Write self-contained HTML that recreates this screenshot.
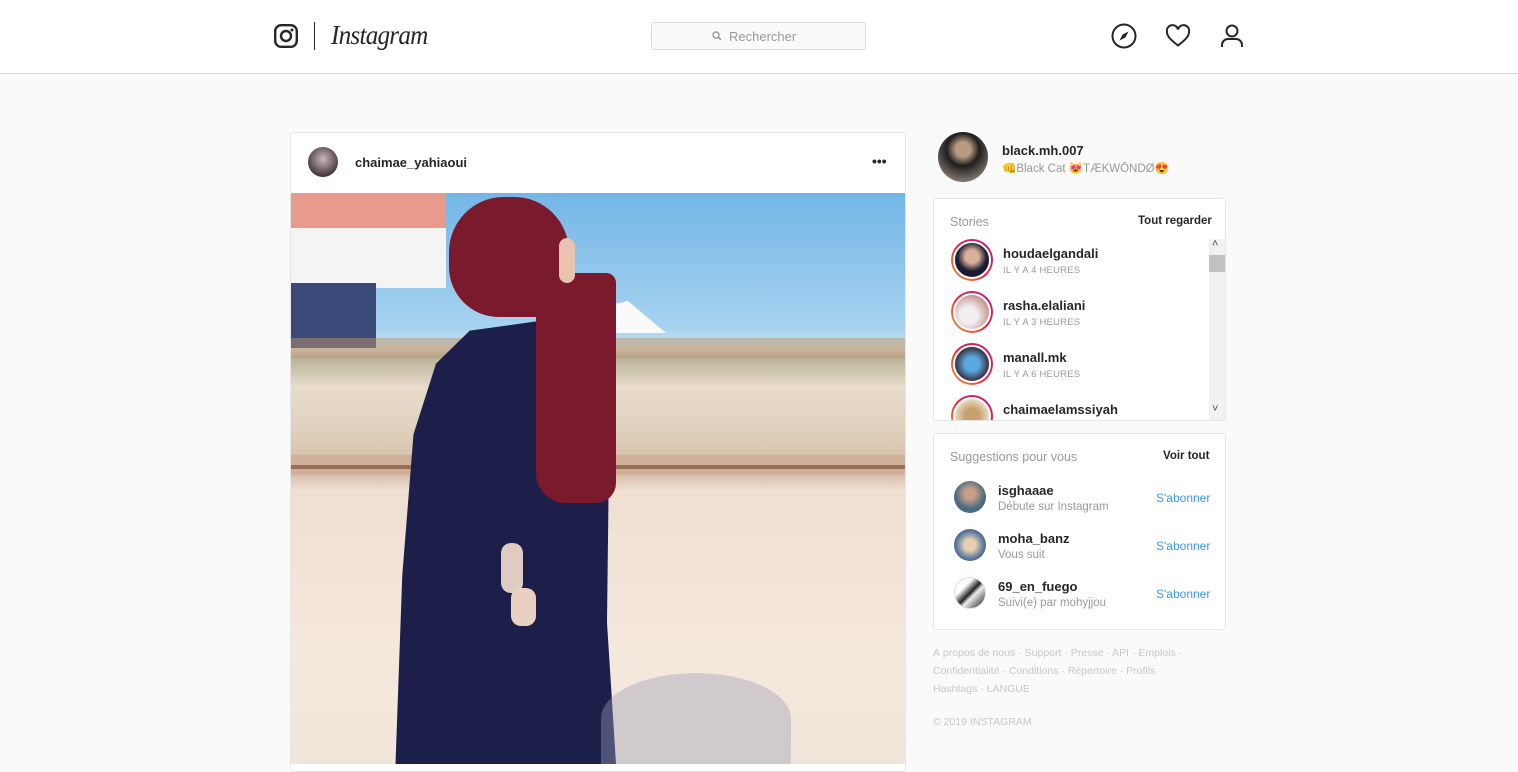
<!DOCTYPE html>
<html><head><meta charset="utf-8"><style>
*{margin:0;padding:0;box-sizing:border-box}
body{width:1518px;height:764px;overflow:hidden;background:#fafafa;font-family:"Liberation Sans","Noto Sans CJK JP",sans-serif;color:#262626;position:relative}
.a{position:absolute}
.hdr{left:0;top:0;width:1518px;height:74px;background:#fff;border-bottom:1px solid #dbdbdb}
.av{position:absolute;border-radius:50%;overflow:hidden}
.n{font-size:13px;font-weight:bold;color:#262626}
.s{font-size:11.5px;color:#999}
.t{font-size:9.5px;color:#999;letter-spacing:.2px}
.ring{position:absolute;width:42px;height:42px;border-radius:50%;background:linear-gradient(45deg,#f09433,#e6683c,#dc2743,#cc2366,#bc1888);padding:2px}
.ring div{width:38px;height:38px;border-radius:50%;border:2px solid #fff}
.f{font-size:10.5px;color:#c7c7c7;line-height:18px}
.sub{font-size:12px;color:#3897f0}
</style></head><body>
<div class="a hdr"></div>
<svg class="a" style="left:274px;top:24px" width="24" height="24" viewBox="0 0 24 24"><rect x="1.2" y="1.2" width="21.6" height="21.6" rx="6" fill="none" stroke="#262626" stroke-width="2.4"/><circle cx="12" cy="12" r="5" fill="none" stroke="#262626" stroke-width="2.4"/><circle cx="18" cy="6" r="1.5" fill="#262626"/></svg>
<div class="a" style="left:314px;top:22px;width:1px;height:28px;background:#262626"></div>
<div class="a" style="left:331px;top:20px;font-family:'Liberation Serif',serif;font-style:italic;font-size:27px;color:#262626;letter-spacing:-0.8px;transform:scaleX(.93);transform-origin:left">Instagram</div>
<div class="a" style="left:651px;top:22px;width:215px;height:28px;background:#fafafa;border:1px solid #dbdbdb;border-radius:3px"></div>
<svg class="a" style="left:712px;top:31px" width="10" height="10" viewBox="0 0 10 10"><circle cx="4" cy="4" r="3" fill="none" stroke="#999" stroke-width="1.4"/><path d="M6.2 6.2L9 9" stroke="#999" stroke-width="1.5"/></svg>
<div class="a" style="left:729px;top:29px;font-size:13px;color:#999">Rechercher</div>
<svg class="a" style="left:1111px;top:23px" width="26" height="26" viewBox="0 0 26 26"><circle cx="13" cy="13" r="11.5" fill="none" stroke="#262626" stroke-width="2"/><path d="M17.5 8.5L14.5 14.5L8.5 17.5L11.5 11.5Z" fill="#262626"/></svg>
<svg class="a" style="left:1165px;top:24px" width="26" height="24" viewBox="0 0 26 24"><path d="M13 21.5C6 16 2 12.5 2 8A5.5 5.5 0 0 1 13 5.5 5.5 5.5 0 0 1 24 8C24 12.5 20 16 13 21.5Z" fill="none" stroke="#262626" stroke-width="2"/></svg>
<svg class="a" style="left:1219px;top:23px" width="26" height="26" viewBox="0 0 26 26"><circle cx="13" cy="8" r="5.5" fill="none" stroke="#262626" stroke-width="2"/><path d="M3 24V22A6 6 0 0 1 9 16H17A6 6 0 0 1 23 22V24" fill="none" stroke="#262626" stroke-width="2"/></svg>

<!-- post -->
<div class="a" style="left:290px;top:132px;width:616px;height:640px;background:#fff;border:1px solid #e6e6e6;border-radius:3px"></div>
<div class="av" style="left:308px;top:147px;width:30px;height:30px;background:radial-gradient(circle at 50% 40%,#c9b7bf,#4a3a40 70%)"></div>
<div class="a n" style="left:355px;top:155px">chaimae_yahiaoui</div>
<div class="a" style="left:872px;top:153px;font-size:14px;font-weight:bold;letter-spacing:0px">•••</div>
<div class="a" style="left:291px;top:193px;width:614px;height:571px;overflow:hidden;background:linear-gradient(180deg,#73b6e6 0%,#a8d3f0 24%,#c2dff0 26%,#d6d8d0 27.5%,#b9b49a 29%,#e8dccb 34%,#e0d2bf 41%,#d6c4ae 46%,#c9ae98 48%,#efdfd2 52%,#f5e8dc 80%,#f2e6da 100%)">
 <div class="a" style="left:0;top:0;width:155px;height:45px;background:#e89a8c"></div>
 <div class="a" style="left:0;top:35px;width:155px;height:60px;background:#f4f4f4"></div>
 <div class="a" style="left:0;top:90px;width:85px;height:65px;background:#3a4a78"></div>
 <div class="a" style="left:280px;top:108px;width:95px;height:32px;background:#fafafa;clip-path:polygon(0 100%,30% 20%,60% 0,100% 100%)"></div>
 <div class="a" style="left:0;top:145px;width:614px;height:20px;background:#b89068;opacity:.5"></div>
 <div class="a" style="left:0;top:262px;width:614px;height:20px;background:#d0b098"></div>
 <div class="a" style="left:0;top:272px;width:614px;height:4px;background:#9a6e5a"></div>
 <div class="a" style="left:100px;top:100px;width:225px;height:471px;background:#1c1f4a;clip-path:polygon(35% 8%,80% 5%,97% 30%,96% 70%,100% 100%,2% 100%,5% 60%,10% 30%,20% 15%)"></div>
 <div class="a" style="left:158px;top:4px;width:120px;height:120px;background:#7a1a2c;border-radius:55px 55px 20px 50px"></div>
 <div class="a" style="left:245px;top:80px;width:80px;height:230px;background:#7a1a2c;border-radius:30px 10px 20px 30px"></div>
 <div class="a" style="left:268px;top:45px;width:16px;height:45px;background:#e8c3b0;border-radius:8px"></div>
 <div class="a" style="left:210px;top:350px;width:22px;height:50px;background:#e0cbc0;border-radius:10px"></div>
 <div class="a" style="left:220px;top:395px;width:25px;height:38px;background:#ead0c2;border-radius:10px"></div>
 <div class="a" style="left:310px;top:480px;width:190px;height:91px;background:#9aa0b8;opacity:.4;border-radius:50% 50% 0 0"></div>
</div>

<!-- right -->
<div class="av" style="left:938px;top:132px;width:50px;height:50px;background:radial-gradient(circle at 50% 35%,#b89a80 18%,#1e1e1e 40%,#7a7068 75%)"></div>
<div class="a n" style="left:1002px;top:143px">black.mh.007</div>
<div class="a s" style="left:1002px;top:161px">👊Black Cat 😻TÆKWŌNDØ😍</div>

<div class="a" style="left:933px;top:198px;width:293px;height:223px;background:#fff;border:1px solid #e6e6e6;border-radius:3px"></div>
<div class="a" style="left:950px;top:215px;font-size:12.5px;color:#999">Stories</div>
<div class="a" style="left:1138px;top:215px;font-size:11.5px;font-weight:bold">Tout regarder</div>
<div class="a" style="left:1209px;top:239px;width:16px;height:181px;background:#f1f1f1"></div>
<div class="a" style="left:1209px;top:255px;width:16px;height:17px;background:#c1c1c1"></div>
<div class="a" style="left:1212px;top:238px;font-size:11px;color:#505050">˄</div>
<div class="a" style="left:1212px;top:403px;font-size:11px;color:#505050">˅</div>
<div class="a" style="left:934px;top:239px;width:275px;height:181px;overflow:hidden">
 <div class="ring" style="left:17px;top:0"><div style="background:radial-gradient(circle at 50% 40%,#d8b09a 25%,#1a1a30 55%)"></div></div>
 <div class="a n" style="left:69px;top:7px">houdaelgandali</div>
 <div class="a t" style="left:69px;top:26px">IL Y A 4 HEURES</div>
 <div class="ring" style="left:17px;top:52px"><div style="background:radial-gradient(circle at 40% 60%,#f0eef0 30%,#c99a94 70%)"></div></div>
 <div class="a n" style="left:69px;top:59px">rasha.elaliani</div>
 <div class="a t" style="left:69px;top:78px">IL Y A 3 HEURES</div>
 <div class="ring" style="left:17px;top:104px"><div style="background:radial-gradient(circle at 50% 50%,#5aa8e0 30%,#3a3040 70%)"></div></div>
 <div class="a n" style="left:69px;top:111px">manall.mk</div>
 <div class="a t" style="left:69px;top:130px">IL Y A 6 HEURES</div>
 <div class="ring" style="left:17px;top:156px"><div style="background:radial-gradient(circle at 50% 50%,#c8a070 30%,#e8dcc0 70%)"></div></div>
 <div class="a n" style="left:69px;top:163px">chaimaelamssiyah</div>
</div>

<div class="a" style="left:933px;top:433px;width:293px;height:197px;background:#fff;border:1px solid #e6e6e6;border-radius:3px"></div>
<div class="a" style="left:950px;top:450px;font-size:12.5px;color:#999">Suggestions pour vous</div>
<div class="a" style="left:1163px;top:450px;font-size:11.5px;font-weight:bold">Voir tout</div>
<div class="av" style="left:954px;top:481px;width:32px;height:32px;background:radial-gradient(circle at 50% 40%,#c8a088 20%,#4a6a80 60%)"></div>
<div class="a n" style="left:998px;top:483px">isghaaae</div>
<div class="a s" style="left:998px;top:501px">Débute sur Instagram</div>
<div class="a sub" style="left:1156px;top:491px">S'abonner</div>
<div class="av" style="left:954px;top:529px;width:32px;height:32px;background:radial-gradient(circle at 50% 50%,#e8d0b0 25%,#5a7aa0 60%,#3a3060)"></div>
<div class="a n" style="left:998px;top:531px">moha_banz</div>
<div class="a s" style="left:998px;top:549px">Vous suit</div>
<div class="a sub" style="left:1156px;top:539px">S'abonner</div>
<div class="av" style="left:954px;top:577px;width:32px;height:32px;border:1px solid #ddd;background:linear-gradient(135deg,#fff 30%,#222 50%,#eee 60%,#111)"></div>
<div class="a n" style="left:998px;top:579px">69_en_fuego</div>
<div class="a s" style="left:998px;top:597px">Suivi(e) par mohyjjou</div>
<div class="a sub" style="left:1156px;top:587px">S'abonner</div>

<div class="a f" style="left:933px;top:644px;width:268px">À propos de nous · Support · Presse · API · Emplois · Confidentialité · Conditions · Répertoire · Profils · Hashtags · LANGUE</div>
<div class="a f" style="left:933px;top:713px">© 2019 INSTAGRAM</div>
</body></html>
